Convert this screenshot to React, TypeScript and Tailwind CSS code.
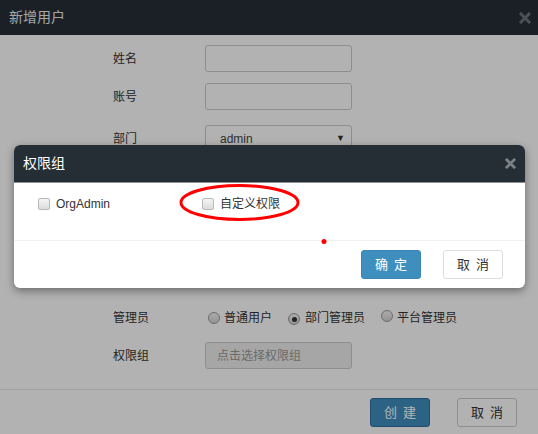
const cjk = { fontFamily: '"Liberation Sans", "Noto Sans CJK SC", sans-serif' };

const CloseX = ({ className }: { className: string }) => (
  <svg viewBox="0 0 12 12" className={className}>
    <path d="M2 2 L10 10 M10 2 L2 10" stroke="currentColor" strokeWidth="3" strokeLinecap="square" />
  </svg>
);

const Checkbox = () => (
  <span className="inline-block h-[12px] w-[12px] shrink-0 rounded-[2px] border border-[#b9b9b9] bg-gradient-to-b from-[#f4f4f4] to-[#dcdcdc]" />
);

const Radio = ({ checked }: { checked?: boolean }) => (
  <span className="inline-flex h-[12px] w-[12px] shrink-0 items-center justify-center rounded-full border border-[#9a9a9a] bg-gradient-to-b from-[#f6f6f6] to-[#d4d4d4]">
    {checked && <span className="h-[5px] w-[5px] rounded-full bg-[#333]" />}
  </span>
);

const FormRow = ({ label, children, className }: { label: string; children?: React.ReactNode; className: string }) => (
  <div className={`flex h-[27px] items-center ${className}`}>
    <div className="w-[205px] pl-[113px] text-[12px] text-[#333]">{label}</div>
    {children}
  </div>
);

const TextInput = ({ placeholder }: { placeholder?: string }) => (
  <div className="flex h-[27px] w-[147px] items-center rounded-[3px] border border-[#ccc] bg-white px-[11px] text-[12px] text-[#999]">
    {placeholder}
  </div>
);

const Btn = ({ text, primary, className }: { text: [string, string]; primary?: boolean; className: string }) => (
  <button
    className={`flex h-[29px] w-[60px] items-center justify-center gap-[6px] rounded-[3px] border text-[13px] ${
      primary ? 'border-[#3a85b4] bg-[#3f8fbe] text-white' : 'border-[#ddd] bg-white text-[#333]'
    } ${className}`}
  >
    <span>{text[0]}</span>
    <span>{text[1]}</span>
  </button>
);

export default function App() {
  return (
    <div className="relative h-[434px] w-[538px] overflow-hidden bg-white" style={cjk}>
      {/* underlying dialog */}
      <div className="flex h-[35px] items-center justify-between bg-[#262f36] pl-[9px] pr-[7px]">
        <span className="text-[14px] text-[#eee]">新增用户</span>
        <CloseX className="h-[12px] w-[12px] text-[#6c757b]" />
      </div>

      <div className="pb-[20px]">
        <FormRow label="姓名" className="mt-[10px]">
          <TextInput />
        </FormRow>
        <FormRow label="账号" className="mt-[11px]">
          <TextInput />
        </FormRow>
        <FormRow label="部门" className="mt-[15px]">
          <div className="flex h-[27px] w-[147px] items-center justify-between rounded-[3px] border border-[#ccc] bg-white pl-[14px] pr-[6px] text-[12px] text-[#444]">
            <span>admin</span>
            <span className="text-[9px] text-[#333]">▼</span>
          </div>
        </FormRow>
        <FormRow label="手机" className="mt-[11px]">
          <TextInput />
        </FormRow>
        <FormRow label="邮箱" className="mt-[11px]">
          <TextInput />
        </FormRow>
        <FormRow label="密码" className="mt-[11px]">
          <TextInput />
        </FormRow>
        <FormRow label="管理员" className="mt-[38px]">
          <div className="flex items-center pl-[3px] text-[12px] text-[#333]">
            <Radio />
            <span className="ml-[4px]">普通用户</span>
            <span className="ml-[16px]"><Radio checked /></span>
            <span className="ml-[5px]">部门管理员</span>
            <span className="ml-[16px]"><Radio /></span>
            <span className="ml-[4px]">平台管理员</span>
          </div>
        </FormRow>
        <FormRow label="权限组" className="mt-[11px]">
          <div className="flex h-[27px] w-[147px] items-center rounded-[3px] border border-[#ccc] bg-[#eee] px-[11px] text-[12px] text-[#999]">
            点击选择权限组
          </div>
        </FormRow>
      </div>

      <div className="flex justify-end gap-[27px] border-t border-[#e5e5e5] pr-[21px] pt-[8px]">
        <Btn text={['创', '建']} primary className="!border-[#2e6da4]" />
        <Btn text={['取', '消']} className="!border-[#ccc]" />
      </div>

      {/* backdrop */}
      <div className="absolute inset-0 bg-black/30" />

      {/* permission group modal */}
      <div className="absolute left-[14px] top-[145px] w-[511px] overflow-hidden rounded-[6px] bg-white shadow-[0_3px_9px_rgba(0,0,0,0.4)]">
        <div className="flex h-[38px] items-center justify-between border-b border-[#8b9297] bg-[#242e34] pl-[9px] pr-[9px]">
          <span className="text-[14px] text-white">权限组</span>
          <CloseX className="h-[11px] w-[11px] text-[#7b8287]" />
        </div>
        <div className="flex h-[57px] items-start pl-[24px] pt-[14px] text-[12px] text-[#333]">
          <label className="flex w-[164px] items-center gap-[6px]">
            <Checkbox />
            <span className="leading-[14px]">OrgAdmin</span>
          </label>
          <label className="flex items-center gap-[6px]">
            <Checkbox />
            <span className="leading-[14px]">自定义权限</span>
          </label>
        </div>
        <div className="flex justify-end gap-[22px] border-t border-[#f2f2f2] pb-[9px] pr-[22px] pt-[9px]">
          <Btn text={['确', '定']} primary />
          <Btn text={['取', '消']} />
        </div>
      </div>

      {/* red annotation */}
      <svg className="pointer-events-none absolute left-0 top-0" width="538" height="434">
        <ellipse cx="239.5" cy="202.5" rx="58.5" ry="17" fill="none" stroke="#ff0000" strokeWidth="3" />
        <circle cx="324" cy="241.5" r="2.5" fill="#ff0000" />
      </svg>
    </div>
  );
}
